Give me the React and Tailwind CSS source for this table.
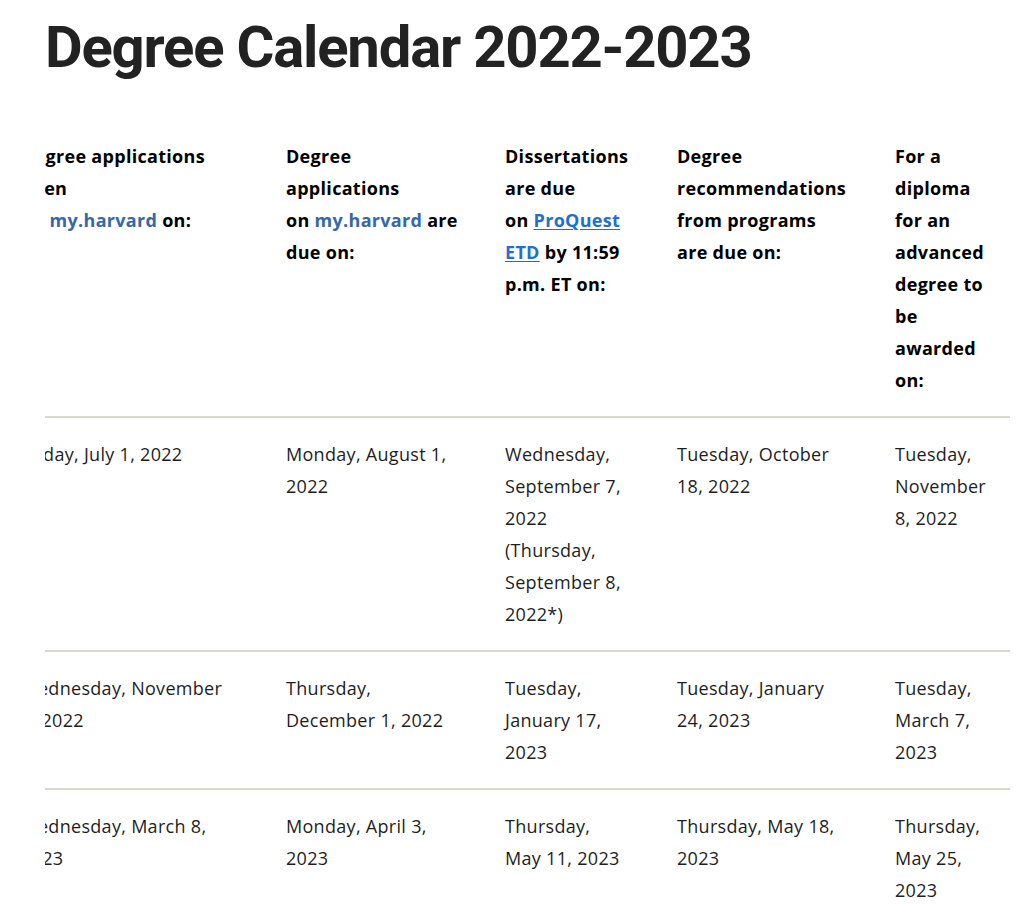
import { useEffect, useRef } from "react";

const rows = [
  [
    ["Friday, July 1, 2022"],
    ["Monday, August 1,", "2022"],
    ["Wednesday,", "September 7,", "2022", "(Thursday,", "September 8,", "2022*)"],
    ["Tuesday, October", "18, 2022"],
    ["Tuesday,", "November", "8, 2022"],
  ],
  [
    ["Wednesday, November", "2, 2022"],
    ["Thursday,", "December 1, 2022"],
    ["Tuesday,", "January 17,", "2023"],
    ["Tuesday, January", "24, 2023"],
    ["Tuesday,", "March 7,", "2023"],
  ],
  [
    ["Wednesday, March 8,", "2023"],
    ["Monday, April 3,", "2023"],
    ["Thursday,", "May 11, 2023"],
    ["Thursday, May 18,", "2023"],
    ["Thursday,", "May 25,", "2023"],
  ],
];

export default function App() {
  const wrap = useRef(null);

  // the table is wider than its box and is scrolled all the way right
  useEffect(() => {
    if (wrap.current) wrap.current.scrollLeft = wrap.current.scrollWidth;
  }, []);

  const cell = "px-[22px] py-5 align-top text-left";

  return (
    <div className="min-h-screen bg-white pl-[45px] pt-[14px] font-['Open_Sans',sans-serif] text-[18px] leading-[32px] tracking-[0.3px] text-[#1e1e1e]">
      <h1 className="font-['Roboto',sans-serif] text-[58px] leading-[67px] font-bold tracking-[-1.2px] text-[#222]">
        Degree Calendar 2022-2023
      </h1>

      <div ref={wrap} className="mt-[39px] w-[965px] overflow-hidden">
        <table className="w-[1011px] table-fixed border-collapse">
          <colgroup>
            <col className="w-[265px]" />
            <col className="w-[219px]" />
            <col className="w-[172px]" />
            <col className="w-[218px]" />
            <col className="w-[137px]" />
          </colgroup>
          <thead>
            <tr className="border-b-2 border-[#d9d9cb] font-bold text-black">
              <th className={cell}>
                Degree applications open
                <br />
                on <a className="text-[#3867a6]">my.harvard</a> on:
              </th>
              <th className={cell}>
                Degree applications
                <br />
                on <a className="text-[#3867a6]">my.harvard</a> are due on:
              </th>
              <th className={cell}>
                Dissertations are due
                <br />
                on <a className="text-[#1f6fd0] underline underline-offset-2">ProQuest ETD</a> by
                11:59 p.m. ET on:
              </th>
              <th className={cell}>
                Degree recommendations
                <br />
                from programs
                <br />
                are due on:
              </th>
              <th className={cell}>For a diploma for an advanced degree to be awarded on:</th>
            </tr>
          </thead>
          <tbody>
            {rows.map((row, i) => (
              <tr key={i} className="border-b-2 border-[#d9d9cb]">
                {row.map((lines, j) => (
                  <td key={j} className={cell}>
                    {lines.map((l, k) => (
                      <span key={k} className="block whitespace-nowrap">
                        {l}
                      </span>
                    ))}
                  </td>
                ))}
              </tr>
            ))}
          </tbody>
        </table>
      </div>
    </div>
  );
}
